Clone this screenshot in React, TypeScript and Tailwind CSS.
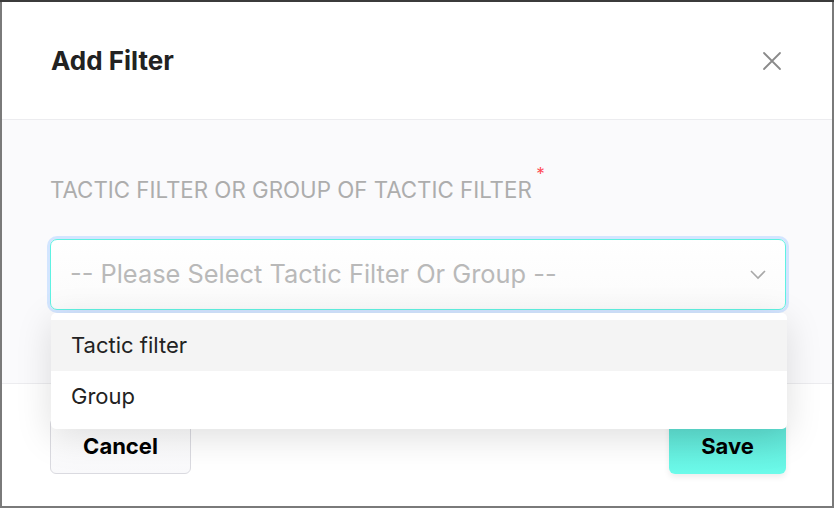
import React from 'react';

const options = ['Tactic filter', 'Group'];

const App: React.FC = () => {
  return (
    <div
      className="relative w-[834px] h-[508px] bg-[#7a7a7a] pt-[2px] pl-[2px] pr-[2px] pb-[2px] overflow-hidden"
      style={{ fontFamily: 'Inter, "Noto Sans", sans-serif' }}
    >
      {/* dark strip of the page behind */}
      <div className="absolute top-0 left-0 w-[834px] h-[2px] bg-[#3b3b3b]" />
      <div className="w-[830px] h-[504px] bg-white flex flex-col">
        {/* header */}
        <div className="h-[118px] shrink-0 flex items-center justify-between pl-[49px] pr-[50px] border-b border-[#ececef]">
          <h2 className="text-[26px] font-bold text-[#222]">Add Filter</h2>
          <svg width="20" height="20" viewBox="0 0 20 20" className="text-[#8a8a8a]">
            <path d="M2 2 L18 18 M18 2 L2 18" stroke="currentColor" strokeWidth="1.8" strokeLinecap="round" />
          </svg>
        </div>

        {/* body */}
        <div className="h-[264px] shrink-0 bg-[#fafafc] pl-[48px] pr-[46px] pt-[55px] border-b border-[#ececef]">
          <div className="relative inline-block">
            <span className="text-[22.3px] text-[#adadad] leading-[30px]">
              TACTIC FILTER OR GROUP OF TACTIC FILTER
            </span>
            <span className="absolute -right-[13px] -top-[9px] text-[17px] text-[#ff4b55] leading-none">*</span>
          </div>

          <div className="relative mt-[34px]">
            <div className="h-[71px] rounded-[7px] border border-[#5ff2e2] ring-[3px] ring-[#d3e5ff] flex items-center justify-between pl-[19px] pr-[18px] bg-gradient-to-b from-white to-[#fbfbfb]">
              <span className="text-[25.4px] text-[#b9b9b9]">-- Please Select Tactic Filter Or Group --</span>
              <svg width="18" height="12" viewBox="0 0 18 12" className="text-[#a8a8a8]">
                <path d="M2 2 L9 9 L16 2" fill="none" stroke="currentColor" strokeWidth="1.6" />
              </svg>
            </div>

            {/* open menu */}
            <div className="absolute left-[1px] top-[74px] w-[736px] bg-white rounded-[5px] py-[7px] shadow-[0_8px_36px_rgba(0,0,0,0.13)] z-10">
              {options.map((opt, i) => (
                <div
                  key={opt}
                  className={`h-[51px] flex items-center pl-[20px] text-[22px] text-[#222] ${i === 0 ? 'bg-[#f4f4f4]' : ''}`}
                >
                  {opt}
                </div>
              ))}
            </div>
          </div>
        </div>

        {/* footer */}
        <div className="flex-1 flex items-start justify-between pl-[48px] pr-[46px] pt-[34px]">
          <button className="w-[141px] h-[56px] rounded-[6px] border border-[#dadae0] bg-gradient-to-b from-white to-[#f9f9fb] text-[22px] font-bold text-black">
            Cancel
          </button>
          <button className="w-[117px] h-[56px] rounded-[6px] bg-gradient-to-b from-[#5cdccf] to-[#6cfbea] text-[22px] font-bold text-black shadow-[0_3px_6px_rgba(0,0,0,0.08)]">
            Save
          </button>
        </div>
      </div>
    </div>
  );
};

export default App;
